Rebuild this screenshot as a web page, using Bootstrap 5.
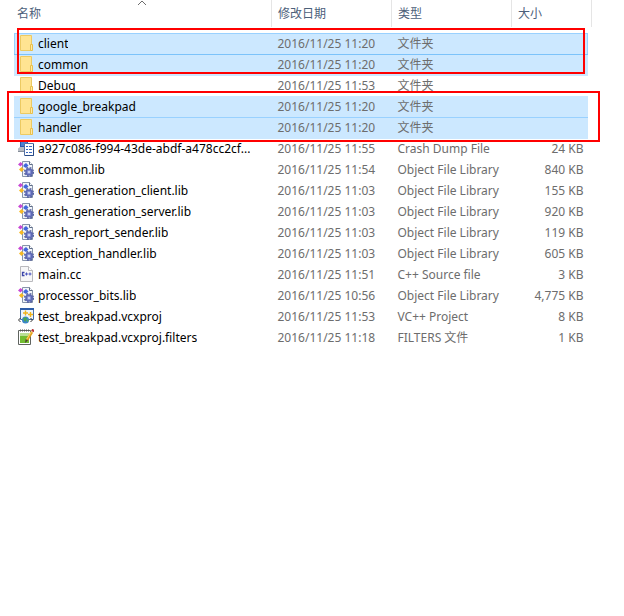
<!DOCTYPE html>
<html lang="zh-CN">
<head>
<meta charset="utf-8">
<meta name="viewport" content="width=device-width, initial-scale=1">
<title>breakpad</title>
<link href="https://cdn.jsdelivr.net/npm/bootstrap@5.3.0/dist/css/bootstrap.min.css" rel="stylesheet">
<style>
body { font-family: "Noto Sans", "Noto Sans CJK SC", sans-serif; font-size: 12px; line-height: 20px; color: #000; background: #fff; }
.explorer { padding: 0 32px 0 14px; }
.file-table { table-layout: fixed; }
.file-table > :not(caption) > * > * { padding: 1px 6px 0; height: 21px; line-height: 20px; background: none; box-shadow: none; color: #6d6d6d; white-space: nowrap; }
.file-table > thead > tr > th { height: 27px; padding: 0 6px 0 3px; border-right: 1px solid #e5e5e5; font-weight: 400; }
.file-table > thead > tr > th + th { padding-left: 6px; }
.col-date, .col-kind { width: 120px; }
.col-size { width: 77px; }
.col-end { width: 3px; }
.sort-btn { color: #4c607a; font-size: 12px; line-height: 27px; }
.sort-mark { position: absolute; top: 0; left: 50%; margin-left: -5px; }
.file-table > tbody.gap-rows > tr > td { height: 6px; padding: 0; line-height: 0; }
.file-table > tbody > tr > td:first-child { padding-left: 4px; color: #000; }
.file-table > tbody > tr > td.size-cell { padding-right: 5px; }
.file-table > tbody > tr.picked > td:not(.end-cell) { background: #cce8ff; box-shadow: 0 1px #cce8ff; }
.file-table > tbody > tr.focused > td:not(.end-cell) { box-shadow: inset 0 1px #99d1ff; }
.file-table > tbody > tr.focused > td:first-child { box-shadow: inset 1px 1px #99d1ff; }
.file-table > tbody > tr.focused > td.size-cell { box-shadow: inset -1px 1px #99d1ff; }
.file-table > tbody > tr.joined > td:not(.end-cell) { box-shadow: inset 0 1px #99d1ff, 0 1px #cce8ff; }
.file-table > tbody > tr.focused + tr.joined > td:not(.end-cell) { box-shadow: inset 0 1px #7cc3fa, 0 1px #cce8ff; }
.name-cell { display: flex; align-items: flex-start; gap: 4px; }
.name-cell svg { flex: none; width: 16px; height: 16px; margin-top: 1px; }
.callout-box { position: absolute; border: 2px solid #f00; pointer-events: none; }
.callout-top { top: 28px; left: 17px; right: 39px; height: 46px; }
.callout-mid { top: 91px; left: 7px; right: 24px; height: 51px; }
</style>
</head>
<body>
<svg class="d-none" aria-hidden="true">
  <symbol id="i-folder" viewBox="0 0 16 16"><path d="M2.500.500h11v15h-11z" fill="#ffe492" stroke="#ecca62"/><path d="M12.500 15.500v-6h2v6z" fill="#ffe9a6" stroke="#e8c04c"/></symbol>
  <symbol id="i-lib" viewBox="0 0 16 16"><path d="M4.500.500h7l3 3v12h-10z" fill="#f1f4f9" stroke="#8794ab"/><path d="M11.500.500v3h3" fill="#fff" stroke="#5f6d86"/><path d="M0 3.500L2.500 1 5 3 2.500 5.500z" fill="#c848d4"/><path d="M5.500 4L8 2l2.500 2.500L8 7 5.500 5.500z" fill="#4267dc"/><path d="M1 8.500L3.500 6 6 8.500 3.500 11z" fill="#f7b924"/><circle cx="11" cy="11" r="4.300" fill="none" stroke="#59659f" stroke-width="1.600" stroke-dasharray="1.900 1.500"/><circle cx="11" cy="11" r="3" fill="#8791d4" stroke="#5d68b4" stroke-width="1.600"/><circle cx="11" cy="11" r="1" fill="#dde2f7"/></symbol>
  <symbol id="i-dump" viewBox="0 0 16 16"><path d="M2 0h8v7H2z" fill="#2b58ad"/><path d="M3 1h6v5H3z" fill="#4f80d0"/><path d="M0 8.500L2 7h6v5H0z" fill="#b7bcc4"/><path d="M0 11h8v1H0z" fill="#858d98"/><path d="M6.500 3.500h9v12h-9z" fill="#fff" stroke="#5672a6"/><path d="M15.500 4v11.500H7" fill="none" stroke="#294b87"/><path d="M8 6.500h2m1 0h3M8 9.500h2m1 0h3M8 12.500h2m1 0h3" stroke="#3568c4"/></symbol>
  <symbol id="i-cc" viewBox="0 0 16 16"><path d="M2.500.500h8l4 4v11h-12z" fill="#f7f7f8" stroke="#b9b9bd"/><path d="M10.500.500v4h4" fill="#fff" stroke="#b9b9bd"/><path d="M6.500 6.500H4.500v3h2" fill="none" stroke="#3d46a8" stroke-width="1.300"/><path d="M7 8h3M8.500 6.500v3M10.500 8h3M12 6.500v3" fill="none" stroke="#4a55c0"/></symbol>
  <symbol id="i-proj" viewBox="0 0 16 16"><path d="M2.500.500h13v11h-13z" fill="#edf4fc" stroke="#4670a8"/><path d="M2 0h14v2H2z" fill="#2f5da8"/><path d="M7.500 2.500v5M5 5h5M12.500 4v5M10 6.500h5" stroke="#f0b41c" stroke-width="1.400"/><circle cx="7.500" cy="12" r="3.500" fill="#3b86c8"/><path d="M5 10.500l3-1.500 1 2-2 3z" fill="#4ba84c"/><path d="M9 12l1.500-1v2L9 14z" fill="#54b551"/><path d="M2.500 10L.500 12l2 2M12.500 10l2 2-2 2" fill="none" stroke="#333"/></symbol>
  <symbol id="i-filter" viewBox="0 0 16 16"><path d="M.500 1.500h12v14H.500z" fill="#fff" stroke="#606460"/><path d="M2 6h9v8H2z" fill="#72bd31"/><path d="M2 4h9v3H2z" fill="#b9df94"/><path d="M2.500.500v2m2-2v2m2-2v2m2-2v2m2-2v2" stroke="#555"/><path d="M14 3L9 11" stroke="#e3a01c" stroke-width="2.600"/><path d="M13.500 2.500L8.500 10.500" stroke="#fbd96d"/><path d="M15.500.500l-1.200 2" stroke="#b83535" stroke-width="2.800"/><path d="M7.700 10l-.700 4 3-2.500z" fill="#4d4030"/></symbol>
</svg>
<main class="explorer position-relative">
  <table class="table table-borderless file-table mb-0">
    <colgroup><col><col class="col-date"><col class="col-kind"><col class="col-size"><col class="col-end"></colgroup>
    <thead>
      <tr>
        <th scope="col" class="position-relative"><svg class="sort-mark" width="10" height="6" aria-hidden="true"><path d="M1 5l4-4 4 4" fill="none" stroke="#6d6d6d"/></svg><button type="button" class="sort-btn border-0 bg-transparent p-0">名称</button></th>
        <th scope="col"><button type="button" class="sort-btn border-0 bg-transparent p-0">修改日期</button></th>
        <th scope="col"><button type="button" class="sort-btn border-0 bg-transparent p-0">类型</button></th>
        <th scope="col" colspan="2"><button type="button" class="sort-btn border-0 bg-transparent p-0">大小</button></th>
      </tr>
    </thead>
    <tbody class="gap-rows" aria-hidden="true"><tr><td colspan="5"></td></tr></tbody>
    <tbody>
      <tr class="picked focused"><td><div class="name-cell"><svg><use href="#i-folder"/></svg><span class="text-truncate">client</span></div></td><td>2016/11/25 11:20</td><td>文件夹</td><td class="size-cell"></td><td class="end-cell p-0"></td></tr>
      <tr class="picked joined"><td><div class="name-cell"><svg><use href="#i-folder"/></svg><span class="text-truncate">common</span></div></td><td>2016/11/25 11:20</td><td>文件夹</td><td class="size-cell"></td><td class="end-cell p-0"></td></tr>
      <tr><td><div class="name-cell"><svg><use href="#i-folder"/></svg><span class="text-truncate">Debug</span></div></td><td>2016/11/25 11:53</td><td>文件夹</td><td class="size-cell"></td><td class="end-cell p-0"></td></tr>
      <tr class="picked"><td><div class="name-cell"><svg><use href="#i-folder"/></svg><span class="text-truncate">google_breakpad</span></div></td><td>2016/11/25 11:20</td><td>文件夹</td><td class="size-cell"></td><td class="end-cell p-0"></td></tr>
      <tr class="picked joined"><td><div class="name-cell"><svg><use href="#i-folder"/></svg><span class="text-truncate">handler</span></div></td><td>2016/11/25 11:20</td><td>文件夹</td><td class="size-cell"></td><td class="end-cell p-0"></td></tr>
      <tr><td><div class="name-cell"><svg><use href="#i-dump"/></svg><span class="text-truncate">a927c086-f994-43de-abdf-a478cc2cf...</span></div></td><td>2016/11/25 11:55</td><td>Crash Dump File</td><td class="size-cell text-end">24 KB</td><td class="end-cell p-0"></td></tr>
      <tr><td><div class="name-cell"><svg><use href="#i-lib"/></svg><span class="text-truncate">common.lib</span></div></td><td>2016/11/25 11:54</td><td>Object File Library</td><td class="size-cell text-end">840 KB</td><td class="end-cell p-0"></td></tr>
      <tr><td><div class="name-cell"><svg><use href="#i-lib"/></svg><span class="text-truncate">crash_generation_client.lib</span></div></td><td>2016/11/25 11:03</td><td>Object File Library</td><td class="size-cell text-end">155 KB</td><td class="end-cell p-0"></td></tr>
      <tr><td><div class="name-cell"><svg><use href="#i-lib"/></svg><span class="text-truncate">crash_generation_server.lib</span></div></td><td>2016/11/25 11:03</td><td>Object File Library</td><td class="size-cell text-end">920 KB</td><td class="end-cell p-0"></td></tr>
      <tr><td><div class="name-cell"><svg><use href="#i-lib"/></svg><span class="text-truncate">crash_report_sender.lib</span></div></td><td>2016/11/25 11:03</td><td>Object File Library</td><td class="size-cell text-end">119 KB</td><td class="end-cell p-0"></td></tr>
      <tr><td><div class="name-cell"><svg><use href="#i-lib"/></svg><span class="text-truncate">exception_handler.lib</span></div></td><td>2016/11/25 11:03</td><td>Object File Library</td><td class="size-cell text-end">605 KB</td><td class="end-cell p-0"></td></tr>
      <tr><td><div class="name-cell"><svg><use href="#i-cc"/></svg><span class="text-truncate">main.cc</span></div></td><td>2016/11/25 11:51</td><td>C++ Source file</td><td class="size-cell text-end">3 KB</td><td class="end-cell p-0"></td></tr>
      <tr><td><div class="name-cell"><svg><use href="#i-lib"/></svg><span class="text-truncate">processor_bits.lib</span></div></td><td>2016/11/25 10:56</td><td>Object File Library</td><td class="size-cell text-end">4,775 KB</td><td class="end-cell p-0"></td></tr>
      <tr><td><div class="name-cell"><svg><use href="#i-proj"/></svg><span class="text-truncate">test_breakpad.vcxproj</span></div></td><td>2016/11/25 11:53</td><td>VC++ Project</td><td class="size-cell text-end">8 KB</td><td class="end-cell p-0"></td></tr>
      <tr><td><div class="name-cell"><svg><use href="#i-filter"/></svg><span class="text-truncate">test_breakpad.vcxproj.filters</span></div></td><td>2016/11/25 11:18</td><td>FILTERS 文件</td><td class="size-cell text-end">1 KB</td><td class="end-cell p-0"></td></tr>
    </tbody>
  </table>
  <div class="callout-box callout-top"></div>
  <div class="callout-box callout-mid"></div>
</main>
<script src="https://cdn.jsdelivr.net/npm/bootstrap@5.3.0/dist/js/bootstrap.bundle.min.js"></script>
</body>
</html>
